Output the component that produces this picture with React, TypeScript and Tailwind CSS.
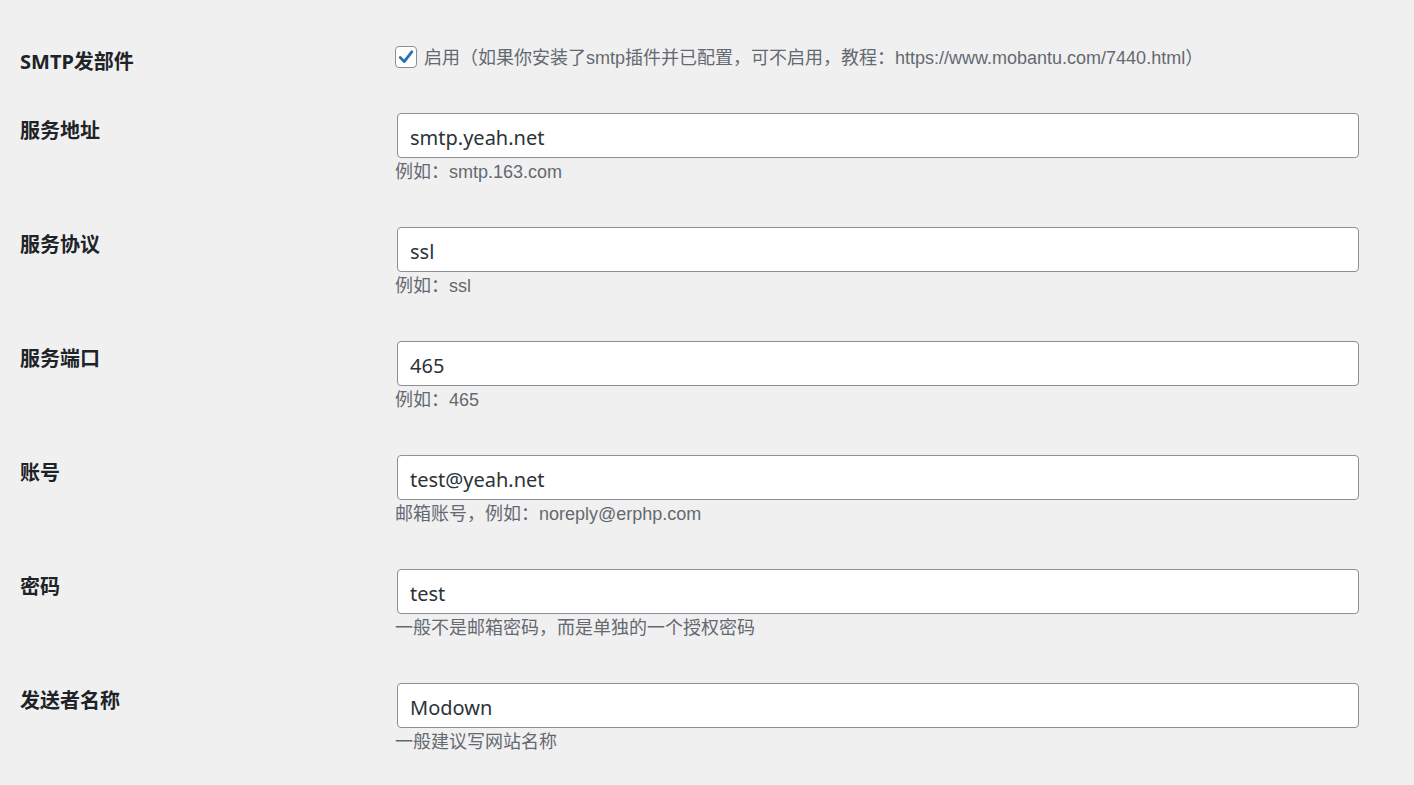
const FONT = "font-['Noto_Sans','Noto_Sans_CJK_SC',sans-serif]";
const HINT_FONT = "font-['Liberation_Sans','Noto_Sans_CJK_SC',sans-serif]";

type Field = { label: string; value: string; hint: string };

const FIELDS: Field[] = [
  { label: "服务地址", value: "smtp.yeah.net", hint: "例如：smtp.163.com" },
  { label: "服务协议", value: "ssl", hint: "例如：ssl" },
  { label: "服务端口", value: "465", hint: "例如：465" },
  { label: "账号", value: "test@yeah.net", hint: "邮箱账号，例如：noreply@erphp.com" },
  { label: "密码", value: "test", hint: "一般不是邮箱密码，而是单独的一个授权密码" },
  { label: "发送者名称", value: "Modown", hint: "一般建议写网站名称" },
];

function CheckBox() {
  return (
    <span className="flex h-[22px] w-[22px] shrink-0 items-center justify-center rounded-[4px] border border-[#8c8f94] bg-white">
      <svg viewBox="0 0 20 20" className="h-[20px] w-[20px]">
        <path
          d="M4.2 10.4 L8.2 14.6 L15.8 4.8"
          fill="none"
          stroke="#2271b1"
          strokeWidth="2.8"
          strokeLinecap="round"
          strokeLinejoin="round"
        />
      </svg>
    </span>
  );
}

export default function App() {
  return (
    <div className={`min-h-screen w-full bg-[#f0f0f1] pl-[20px] pt-[45px] ${FONT}`}>
      {/* SMTP 开关 */}
      <div className="flex h-[68px] items-start">
        <div className="w-[375px] shrink-0 pt-[3px] text-[20px] font-bold leading-[28px] text-[#1d2327]">
          SMTP发部件
        </div>
        <label className="flex items-center gap-[7px]">
          <CheckBox />
          <span className={`pt-[2px] text-[18px] leading-[22px] text-[#646970] ${HINT_FONT}`}>
            启用（如果你安装了smtp插件并已配置，可不启用，教程：https://www.mobantu.com/7440.html）
          </span>
        </label>
      </div>

      {FIELDS.map((f) => (
        <div key={f.label} className="flex h-[114px] items-start">
          <div className="w-[375px] shrink-0 pt-[4px] text-[20px] font-bold leading-[28px] text-[#1d2327]">
            {f.label}
          </div>
          <div className="flex w-[964px] flex-col">
            <input
              readOnly
              value={f.value}
              className={`ml-[2px] h-[45px] w-[962px] rounded-[4px] border border-[#8c8f94] bg-white px-[12px] pt-[3px] text-[20px] text-[#2c3338] outline-none ${FONT}`}
            />
            <p className={`mt-[2px] text-[18px] leading-[24px] text-[#646970] ${HINT_FONT}`}>
              {f.hint}
            </p>
          </div>
        </div>
      ))}
    </div>
  );
}
